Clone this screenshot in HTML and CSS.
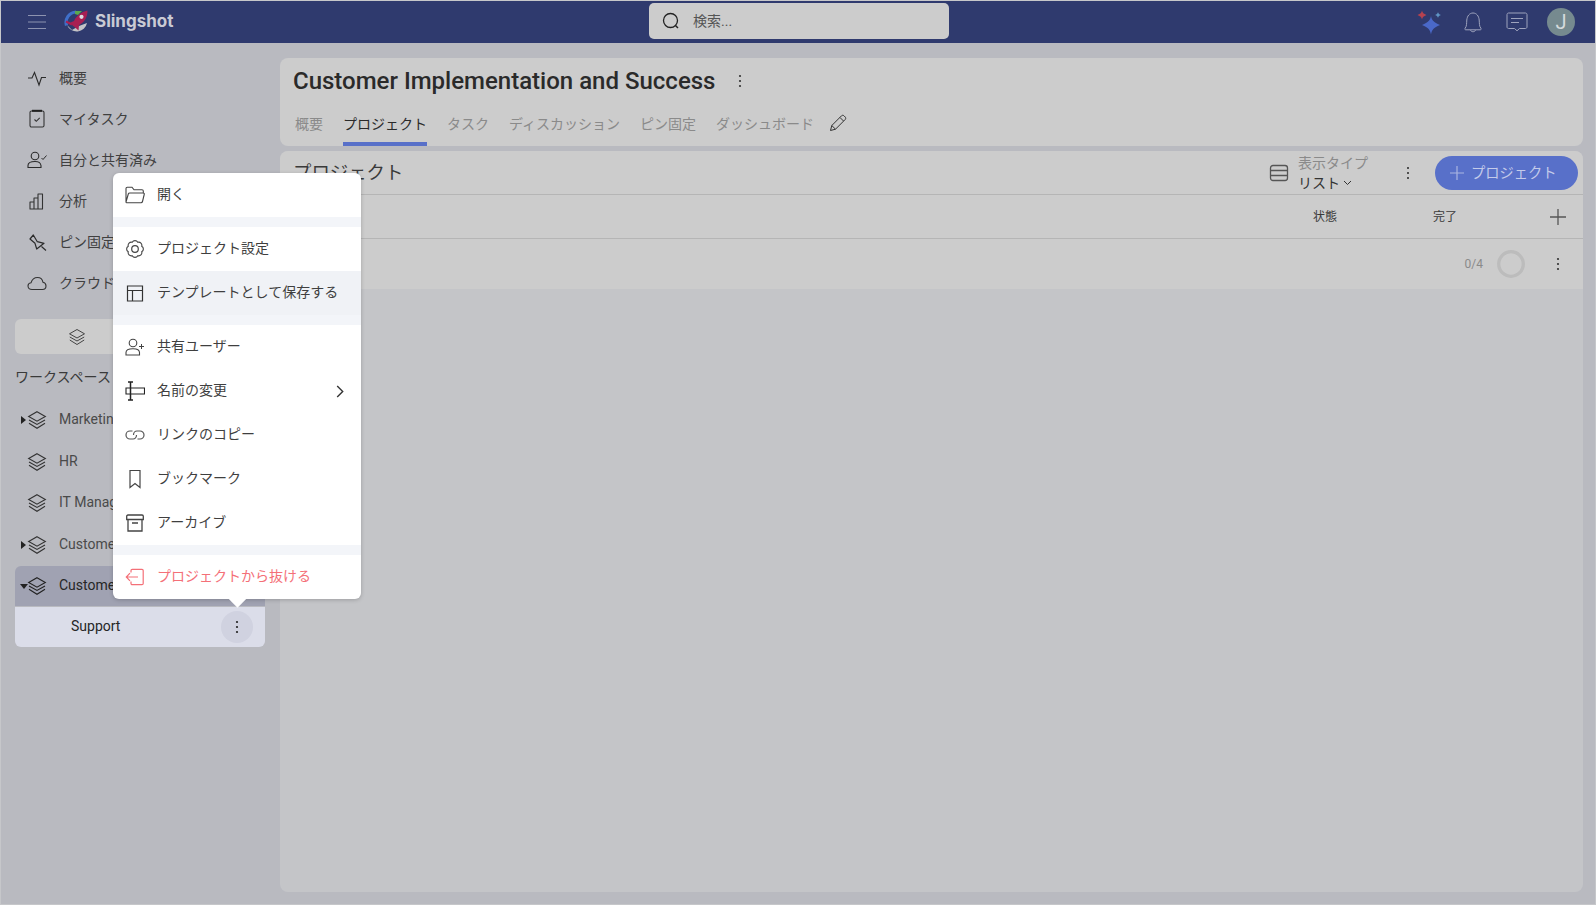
FILE: index.html
```html
<!DOCTYPE html>
<html lang="ja">
<head>
<meta charset="utf-8">
<title>Slingshot</title>
<link rel="stylesheet" href="styles.css">
</head>
<body>
<div class="app">
  <header class="topbar">
    <div class="brand">
      <svg class="burger" width="18" height="16" viewBox="0 0 18 16"><path d="M0 1.500h18M0 8h18M0 14.500h18" stroke="#8d93b0" stroke-width="1" fill="none"/></svg>
      <svg class="logo" width="24" height="24" viewBox="0 0 24 24">
        <path d="M3 15A10.500 10.500 0 0 0 23 13L15 16 8 20Z" fill="#c2c3c7"/>
        <path d="M2.500 15.500A10.500 10.500 0 0 1 12 2" fill="none" stroke="#3f6fc9" stroke-width="3.200"/>
        <path d="M11 1 18 1 14 5 11 4Z" fill="#5aa84e"/>
        <path d="M6.500 12.500 10 11C12 6 17 2 23.500 0.500 23.500 7 20.500 12.500 15 15L14.500 20.500 10 16.500 9 16Z" fill="#a81f52"/>
        <circle cx="17.500" cy="6.800" r="2.100" fill="#dcdce0"/>
        <path d="M2 11.500 8 14.500" stroke="#a81f52" stroke-width="2"/>
      </svg>
      <span class="brand-name">Slingshot</span>
    </div>
    <div class="search">
      <svg width="20" height="20" viewBox="0 0 20 20"><circle cx="9.500" cy="9.500" r="7" fill="none" stroke="#222" stroke-width="1.300"/><path d="M14.500 14.500 17 17" stroke="#222" stroke-width="1.500"/></svg>
      <span class="search-text">検索...</span>
    </div>
    <div class="top-actions">
      <svg class="star" width="26" height="26" viewBox="0 0 26 26">
        <path d="M15 7C15.800 11 17.500 13.500 24 16 17.500 18.500 15.800 21 15 25.500 14.200 21 12.500 18.500 6 16 12.500 13.500 14.200 11 15 7Z" fill="#4a68c8"/>
        <path d="M6 1.500C6.500 3.800 7.500 4.800 10.500 6 7.500 7.200 6.500 8.200 6 10.500 5.500 8.200 4.500 7.200 1.500 6 4.500 4.800 5.500 3.800 6 1.500Z" fill="#b5424f"/>
        <path d="M22 3C22.300 4.500 23 5.200 25 6 23 6.800 22.300 7.500 22 9 21.700 7.500 21 6.800 19 6 21 5.200 21.700 4.500 22 3Z" fill="#5f94c4"/>
      </svg>
      <svg class="bell" width="20" height="22" viewBox="0 0 20 22"><path d="M2 17.500C4 15 3.500 12 3.800 9 4.200 5 6.500 2 10 2S15.800 5 16.200 9C16.500 12 16 15 18 17.500 18.500 18.300 18 18.800 17 18.800H3C2 18.800 1.500 18.300 2 17.500ZM7.500 19C8 21.300 12 21.300 12.500 19" fill="none" stroke="#9ea3bd" stroke-width="1"/></svg>
      <svg class="chat" width="22" height="20" viewBox="0 0 22 20"><path d="M2.500 1H19.500C20.300 1 21 1.700 21 2.500V15C21 15.800 20.300 16.500 19.500 16.500H13.500L11 18.800 8.500 16.500H2.500C1.700 16.500 1 15.800 1 15V2.500C1 1.700 1.700 1 2.500 1ZM5 6.500H17M5 10.500H13" fill="none" stroke="#9ea3bd" stroke-width="1"/></svg>
      <span class="avatar">J</span>
    </div>
  </header>

  <div class="body">
    <aside class="sidebar">
      <nav class="nav">
        <a class="nav-item"><svg class="ic" width="20" height="20" viewBox="0 0 20 20"><path d="M1 10H5L7.500 4.500 12 17 14.500 9.500H19" fill="none" stroke="#2b2b2b" stroke-width="1.100"/></svg><span class="nav-text">概要</span></a>
        <a class="nav-item"><svg class="ic" width="20" height="20" viewBox="0 0 20 20"><path d="M4.500 2H15.500C16.300 2 17 2.700 17 3.500V16.500C17 17.300 16.300 18 15.500 18H4.500C3.700 18 3 17.300 3 16.500V3.500C3 2.700 3.700 2 4.500 2Z" fill="none" stroke="#333" stroke-width="1.100"/><path d="M5 1.800H15" stroke="#222" stroke-width="2"/><path d="M7.500 10.500 9.300 12.300 12.700 8.800" fill="none" stroke="#333" stroke-width="1.100"/></svg><span class="nav-text">マイタスク</span></a>
        <a class="nav-item"><svg class="ic" width="20" height="20" viewBox="0 0 20 20"><circle cx="8" cy="6" r="3.800" fill="none" stroke="#2b2b2b" stroke-width="1.100"/><path d="M1 17.500V15.500C1 12.500 3.500 11.500 8 11.500S13.500 12.800 14 15.500V17.500Z" fill="none" stroke="#2b2b2b" stroke-width="1.100"/><path d="M14.500 8 16 9.500 19.500 5.500" fill="none" stroke="#2b2b2b" stroke-width="1"/></svg><span class="nav-text">自分と共有済み</span></a>
        <a class="nav-item"><svg class="ic" width="20" height="20" viewBox="0 0 20 20"><path d="M3 11H7V18H3ZM7 7H11V18H7ZM11 3H15.500V18H11Z" fill="none" stroke="#333" stroke-width="1.100" stroke-linejoin="round"/></svg><span class="nav-text">分析</span></a>
        <a class="nav-item"><svg class="ic" width="20" height="20" viewBox="0 0 20 20"><path d="M3 7 6.300 3 10.300 9.700 17 11.300 9.700 17 8 11.300Z" fill="none" stroke="#2b2b2b" stroke-width="1.200" stroke-linejoin="round"/><path d="M14.500 14.500 19 18.500" stroke="#2b2b2b" stroke-width="1.200"/></svg><span class="nav-text">ピン固定</span></a>
        <a class="nav-item"><svg class="ic" width="20" height="20" viewBox="0 0 20 20"><path d="M5 16.500C2.500 16.500 1 15 1 13S2.500 10 4 9.800C5 6.500 7.500 4.500 10.500 4.500 13.500 4.500 15.500 6.500 16 9.300 18 9.800 19 11.300 19 13 19 15 17.500 16.500 15.500 16.500Z" fill="none" stroke="#333" stroke-width="1.100"/></svg><span class="nav-text">クラウドストレージ</span></a>
      </nav>
      <div class="ws-button">
        <svg width="18" height="18" viewBox="0 0 18 18"><path d="M9 1.500 16.500 5.800 9 10 1.500 5.800Z" fill="none" stroke="#444" stroke-width="1"/><path d="M1.800 9 9 13 16.200 9M1.800 12 9 16.500 16.200 12" fill="none" stroke="#444" stroke-width="1"/></svg>
      </div>
      <div class="ws-title">ワークスペース</div>
      <div class="tree">
        <div class="tree-row"><span class="tri"></span><svg class="layers" width="20" height="20" viewBox="0 0 18 18"><path d="M9 1.500 16.500 5.800 9 10 1.500 5.800Z" fill="none" stroke="#333" stroke-width="1"/><path d="M1.800 9 9 13 16.200 9M1.800 12 9 16.500 16.200 12" fill="none" stroke="#333" stroke-width="1"/></svg><span class="tree-label">Marketing</span></div>
        <div class="tree-row"><svg class="layers" width="20" height="20" viewBox="0 0 18 18"><path d="M9 1.500 16.500 5.800 9 10 1.500 5.800Z" fill="none" stroke="#333" stroke-width="1"/><path d="M1.800 9 9 13 16.200 9M1.800 12 9 16.500 16.200 12" fill="none" stroke="#333" stroke-width="1"/></svg><span class="tree-label">HR</span></div>
        <div class="tree-row"><svg class="layers" width="20" height="20" viewBox="0 0 18 18"><path d="M9 1.500 16.500 5.800 9 10 1.500 5.800Z" fill="none" stroke="#333" stroke-width="1"/><path d="M1.800 9 9 13 16.200 9M1.800 12 9 16.500 16.200 12" fill="none" stroke="#333" stroke-width="1"/></svg><span class="tree-label">IT Management</span></div>
        <div class="tree-row"><span class="tri"></span><svg class="layers" width="20" height="20" viewBox="0 0 18 18"><path d="M9 1.500 16.500 5.800 9 10 1.500 5.800Z" fill="none" stroke="#333" stroke-width="1"/><path d="M1.800 9 9 13 16.200 9M1.800 12 9 16.500 16.200 12" fill="none" stroke="#333" stroke-width="1"/></svg><span class="tree-label">Customer</span></div>
        <div class="tree-row selected"><span class="tri open"></span><svg class="layers" width="20" height="20" viewBox="0 0 18 18"><path d="M9 1.500 16.500 5.800 9 10 1.500 5.800Z" fill="none" stroke="#222" stroke-width="1"/><path d="M1.800 9 9 13 16.200 9M1.800 12 9 16.500 16.200 12" fill="none" stroke="#222" stroke-width="1"/></svg><span class="tree-label">Customer</span></div>
      </div>
      <div class="support-row">
        <span class="support-label">Support</span>
        <span class="round-dots"><svg width="4" height="14" viewBox="0 0 4 14"><circle cx="2" cy="2" r="1.100" fill="#222"/><circle cx="2" cy="7" r="1.100" fill="#222"/><circle cx="2" cy="12" r="1.100" fill="#222"/></svg></span>
      </div>
    </aside>

    <main class="main">
      <section class="card head-card">
        <div class="title-row">
          <h1 class="title">Customer Implementation and Success</h1>
          <svg width="4" height="14" viewBox="0 0 4 14"><circle cx="2" cy="2" r="1.100" fill="#333"/><circle cx="2" cy="7" r="1.100" fill="#333"/><circle cx="2" cy="12" r="1.100" fill="#333"/></svg>
        </div>
        <div class="tabs">
          <span class="tab">概要</span>
          <span class="tab active">プロジェクト</span>
          <span class="tab">タスク</span>
          <span class="tab">ディスカッション</span>
          <span class="tab">ピン固定</span>
          <span class="tab">ダッシュボード</span>
          <svg class="pencil" width="18" height="18" viewBox="0 0 18 18"><path d="M1.500 16.500 2.800 11.500 12.500 1.800C13.200 1.100 14.300 1.100 15 1.800L16.200 3C16.900 3.700 16.900 4.800 16.200 5.500L6.500 15.200ZM11 3.500 14.500 7M2.800 11.500 6.500 15.200" fill="none" stroke="#333" stroke-width="1"/></svg>
        </div>
      </section>

      <section class="panel">
        <div class="panel-head">
          <h2 class="panel-title">プロジェクト</h2>
          <svg class="view-ic" width="20" height="20" viewBox="0 0 20 20"><rect x="1.500" y="2.500" width="17" height="15" rx="2.500" fill="none" stroke="#555" stroke-width="1.300"/><path d="M1.500 7.500H18.500M1.500 12.500H18.500" stroke="#555" stroke-width="1.300"/></svg>
          <div class="view-type">
            <span class="view-label">表示タイプ</span>
            <span class="view-value">リスト<svg width="9" height="6" viewBox="0 0 9 6"><path d="M1 1 4.500 4.500 8 1" fill="none" stroke="#333" stroke-width="1"/></svg></span>
          </div>
          <svg class="head-dots" width="4" height="14" viewBox="0 0 4 14"><circle cx="2" cy="2" r="1.100" fill="#333"/><circle cx="2" cy="7" r="1.100" fill="#333"/><circle cx="2" cy="12" r="1.100" fill="#333"/></svg>
          <button class="add-btn"><svg width="14" height="14" viewBox="0 0 14 14"><path d="M7 0V14M0 7H14" stroke="#aab5e2" stroke-width="1.200"/></svg><span>プロジェクト</span></button>
        </div>
        <div class="col-head">
          <span class="col state">状態</span>
          <span class="col done">完了</span>
          <svg class="col-plus" width="16" height="16" viewBox="0 0 16 16"><path d="M8 0V16M0 8H16" stroke="#555" stroke-width="1.300"/></svg>
        </div>
        <div class="row">
          <span class="count">0/4</span>
          <svg class="ring" width="28" height="28" viewBox="0 0 28 28"><circle cx="14" cy="14" r="12.300" fill="none" stroke="#bcbcbc" stroke-width="3.300"/></svg>
          <svg class="row-dots" width="4" height="14" viewBox="0 0 4 14"><circle cx="2" cy="2" r="1.100" fill="#333"/><circle cx="2" cy="7" r="1.100" fill="#333"/><circle cx="2" cy="12" r="1.100" fill="#333"/></svg>
        </div>
      </section>
    </main>
  </div>

  <div class="menu">
    <div class="menu-item"><svg width="20" height="18" viewBox="0 0 20 18"><path d="M1 16V2.500C1 1.700 1.500 1.200 2.300 1.200H7L9 3.800H17C17.800 3.800 18.300 4.300 18.300 5V7M1 16 3.300 8C3.500 7.300 4 7 4.800 7H18C19 7 19.500 7.700 19.200 8.500L17.500 15.500C17.300 16.300 16.800 16.700 16 16.700H1.700C1.200 16.700 1 16.300 1 16Z" fill="none" stroke="#444" stroke-width="1.100"/></svg><span class="menu-text">開く</span></div>
    <div class="menu-sep"></div>
    <div class="menu-item"><svg width="20" height="20" viewBox="0 0 20 20"><path d="M16.740 7.210A3.200 3.200 0 0 1 16.740 12.790 3.200 3.200 0 0 1 12.790 16.740 3.200 3.200 0 0 1 7.210 16.740 3.200 3.200 0 0 1 3.260 12.790 3.200 3.200 0 0 1 3.260 7.210 3.200 3.200 0 0 1 7.210 3.260 3.200 3.200 0 0 1 12.790 3.260 3.200 3.200 0 0 1 16.740 7.210Z" fill="none" stroke="#444" stroke-width="1.100"/><circle cx="10" cy="10" r="3.300" fill="none" stroke="#444" stroke-width="1.200"/></svg><span class="menu-text">プロジェクト設定</span></div>
    <div class="menu-item hover"><svg width="20" height="20" viewBox="0 0 20 20"><path d="M2.500 3H17.500V18H2.500ZM2.500 7.500H17.500M7.500 7.500V18" fill="none" stroke="#333" stroke-width="1.200"/></svg><span class="menu-text">テンプレートとして保存する</span></div>
    <div class="menu-sep"></div>
    <div class="menu-item"><svg width="20" height="20" viewBox="0 0 20 20"><circle cx="8" cy="6" r="3.800" fill="none" stroke="#444" stroke-width="1.100"/><path d="M1 18V15.500C1 12.800 3.500 11.800 8 11.800S14.500 13 14.500 15.500V18Z" fill="none" stroke="#444" stroke-width="1.100"/><path d="M16.500 7V12M14 9.500H19" stroke="#444" stroke-width="1"/></svg><span class="menu-text">共有ユーザー</span></div>
    <div class="menu-item"><svg width="20" height="20" viewBox="0 0 20 20"><path d="M3 1H8M3 19H8M5.500 1V19" stroke="#222" stroke-width="1.500" fill="none"/><path d="M1 7H19.500V13H1Z" fill="none" stroke="#222" stroke-width="1.100"/></svg><span class="menu-text">名前の変更</span><svg class="chev" width="8" height="13" viewBox="0 0 8 13"><path d="M1.200 1 6.700 6.500 1.200 12" fill="none" stroke="#333" stroke-width="1.400"/></svg></div>
    <div class="menu-item"><svg width="20" height="20" viewBox="0 0 20 20"><path d="M7.500 6H5C2.800 6 1 7.800 1 10S2.800 14 5 14H8C10 14 11.500 12.200 11.500 10M12.500 14H15C17.200 14 19 12.200 19 10S17.200 6 15 6H12C10 6 8.500 7.800 8.500 10" fill="none" stroke="#555" stroke-width="1.200"/></svg><span class="menu-text">リンクのコピー</span></div>
    <div class="menu-item"><svg width="20" height="20" viewBox="0 0 20 20"><path d="M5 1.500H15V18.500L10 14.500 5 18.500Z" fill="none" stroke="#444" stroke-width="1.200"/></svg><span class="menu-text">ブックマーク</span></div>
    <div class="menu-item"><svg width="20" height="20" viewBox="0 0 20 20"><path d="M3 2H17C17.800 2 18.300 2.500 18.300 3.300V6.500H1.700V3.300C1.700 2.500 2.200 2 3 2ZM3 6.500V18H17V6.500M7 10H13" fill="none" stroke="#444" stroke-width="1.300"/></svg><span class="menu-text">アーカイブ</span></div>
    <div class="menu-sep"></div>
    <div class="menu-item danger"><svg width="20" height="20" viewBox="0 0 20 20"><path d="M6 5.500V3.500C6 2.800 6.500 2.300 7.200 2.300H17C17.700 2.300 18.200 2.800 18.200 3.500V16.500C18.200 17.200 17.700 17.700 17 17.700H7.200C6.500 17.700 6 17.200 6 16.500V14.500M13 10H1.500M5 6.200 1.300 10 5 13.800" fill="none" stroke="#f47078" stroke-width="1.200"/></svg><span class="menu-text">プロジェクトから抜ける</span></div>
    <span class="menu-arrow"></span>
  </div>
</div>
</body>
</html>
```

FILE: styles.css
```css
* { box-sizing: border-box; }
html, body { margin: 0; height: 100%; }
body {
  font-family: Roboto, "Noto Sans CJK JP", sans-serif;
  font-size: 14px;
  color: #333;
  overflow: hidden;
}
.app {
  position: relative;
  width: 1596px;
  height: 905px;
  border: 1px solid #c6c7ca;
  background: #b9bac0;
  display: flex;
  flex-direction: column;
}
.topbar {
  flex: none;
  height: 42px;
  background: #2f3a6e;
  display: flex;
  align-items: center;
}
.brand {
  width: 648px;
  display: flex;
  align-items: center;
  padding-left: 27px;
}
.burger { flex: none; }
.logo { margin-left: 18px; flex: none; }
.brand-name {
  margin: 0 0 2px 7px;
  font-family: Inter, sans-serif;
  font-weight: 700;
  font-size: 17px;
  color: #c9cad4;
}
.search {
  width: 300px;
  height: 36px;
  margin-bottom: 2px;
  background: #cccccc;
  border-radius: 5px;
  display: flex;
  align-items: center;
  padding-left: 12px;
  gap: 12px;
}
.search-text { font-size: 14px; color: #555; margin-bottom: 2px; }
.top-actions {
  flex: 1;
  display: flex;
  align-items: center;
  justify-content: flex-end;
  padding-right: 20px;
}
.star { margin-right: 21px; }
.bell { margin-right: 23px; }
.chat { margin-right: 19px; }
.avatar {
  width: 28px;
  height: 28px;
  border-radius: 50%;
  background: #768a8f;
  color: #d5dadc;
  display: flex;
  align-items: center;
  justify-content: center;
  font-size: 20px;
}

.body { flex: 1; display: flex; min-height: 0; }
.sidebar {
  width: 279px;
  flex: none;
  padding-top: 14px;
  overflow: hidden;
}
.nav-item {
  height: 41px;
  display: flex;
  align-items: center;
  padding-left: 26px;
  color: #404040;
  white-space: nowrap;
}
.nav-text { margin-bottom: 2px; }
.ic { flex: none; margin-right: 12px; }
.ws-button {
  margin: 16px 14px 0;
  width: 250px;
  height: 35px;
  background: #cccccc;
  border-radius: 6px;
  display: flex;
  align-items: center;
  padding-left: 53px;
}
.ws-title {
  height: 46px;
  line-height: 47px;
  padding-left: 14px;
  white-space: nowrap;
  color: #3a3a3a;
}
.tree { display: flex; flex-direction: column; gap: 1.500px; }
.tree-row {
  position: relative;
  height: 40px;
  margin: 0 14px;
  width: 250px;
  padding-left: 12px;
  display: flex;
  align-items: center;
  color: #4a4a4a;
  border-radius: 6px 6px 0 0;
}
.tree-row.selected { background: #a0a2b2; color: #262626; }
.tri {
  position: absolute;
  left: 6px;
  top: 16px;
  width: 0;
  height: 0;
  border-left: 5px solid #222;
  border-top: 4px solid transparent;
  border-bottom: 4px solid transparent;
}
.tri.open {
  left: 5px;
  top: 18px;
  border-left: 4.500px solid transparent;
  border-right: 4.500px solid transparent;
  border-top: 5px solid #222;
  border-bottom: 0;
}
.layers { flex: none; margin-right: 12px; }
.tree-label {
  font-size: 14px;
  white-space: nowrap;
  margin-bottom: 2px;
}
.support-row {
  margin: 1px 14px 0;
  width: 250px;
  height: 40px;
  background: #dbdde9;
  border-radius: 0 0 6px 6px;
  display: flex;
  align-items: center;
  justify-content: space-between;
  padding: 0 12px 0 56px;
  color: #262626;
}
.support-label { margin-bottom: 2px; }
.round-dots {
  width: 32px;
  height: 32px;
  border-radius: 50%;
  background: #d0d2e0;
  display: flex;
  align-items: center;
  justify-content: center;
}

.main {
  flex: 1;
  min-width: 0;
  padding: 15px 12px 12px 0;
  display: flex;
  flex-direction: column;
  gap: 5px;
}
.card {
  background: #cccccc;
  border-radius: 8px;
}
.head-card {
  flex: none;
  height: 88px;
  padding: 0 13px;
  display: flex;
  flex-direction: column;
}
.title-row {
  height: 46px;
  display: flex;
  align-items: center;
  gap: 23px;
}
.title {
  margin: 0;
  font-size: 24px;
  font-weight: 500;
  color: #2a2a2a;
}
.tabs {
  flex: 1;
  display: flex;
  align-items: stretch;
  gap: 20px;
  padding-left: 2px;
}
.tab {
  font-size: 14px;
  color: #8a8a8a;
  padding-top: 9px;
  white-space: nowrap;
}
.tab.active {
  color: #2a2a2a;
  border-bottom: 4px solid #5870c9;
}
.pencil { margin: 10px 0 0 -5px; }

.panel {
  flex: 1;
  background: #c4c5c8;
  border-radius: 8px;
  overflow: hidden;
  display: flex;
  flex-direction: column;
}
.panel-head {
  flex: none;
  height: 44px;
  background: #cccccc;
  border-bottom: 1px solid #b5b5b5;
  display: flex;
  align-items: center;
  padding: 0 5px 0 13px;
}
.panel-title {
  margin: 0 auto 3px 0;
  font-size: 18.400px;
  font-weight: 400;
  color: #3a3a3a;
}
.view-ic { margin-right: 9px; }
.view-type { display: flex; flex-direction: column; width: 108px; }
.view-label { font-size: 14px; line-height: 20px; color: #8a8a8a; }
.view-value {
  font-size: 14px;
  line-height: 20px;
  color: #333;
  display: flex;
  align-items: center;
  gap: 3px;
}
.head-dots { margin-right: 25px; }
.add-btn {
  width: 143px;
  height: 34px;
  border: 0;
  border-radius: 17px;
  background: #5870c9;
  color: #c4cbea;
  font: inherit;
  font-size: 14.250px;
  display: flex;
  align-items: center;
  padding: 0 0 0 15px;
  gap: 7px;
}
.add-btn span { margin-bottom: 2px; }
.col-head {
  flex: none;
  height: 44px;
  background: #cccccc;
  border-bottom: 1px solid #b5b5b5;
  display: flex;
  align-items: center;
  padding-right: 17px;
}
.col { font-size: 12px; color: #3a3a3a; width: 24px; margin-bottom: 2px; }
.state { margin-left: auto; }
.done { margin-left: 96px; }
.col-plus { margin-left: 93px; }
.row {
  flex: none;
  height: 50px;
  background: #cccccc;
  display: flex;
  align-items: center;
  justify-content: flex-end;
  padding-right: 23px;
}
.count { font-size: 12px; color: #8a8a8a; margin-right: 14px; }
.ring { margin-right: 31px; }

.menu {
  position: absolute;
  left: 112px;
  top: 172px;
  width: 248px;
  background: #fff;
  border-radius: 6px;
  box-shadow: 0 1px 4px rgba(0, 0, 0, 0.2);
  color: #3f3f3f;
}
.menu-item {
  height: 44px;
  display: flex;
  align-items: center;
  padding-left: 12px;
  gap: 12px;
  position: relative;
}
.menu-item svg { flex: none; }
.menu-text { margin-bottom: 4px; }
.menu-item.hover { background: #f0f2f6; }
.menu-item.danger { color: #f47078; }
.menu-sep { height: 10px; background: #f3f5f9; }
.chev { margin-left: auto; margin-right: 17px; }
.menu-arrow {
  position: absolute;
  left: 118px;
  bottom: -6px;
  width: 13px;
  height: 13px;
  background: #fff;
  transform: rotate(45deg);
}
```
